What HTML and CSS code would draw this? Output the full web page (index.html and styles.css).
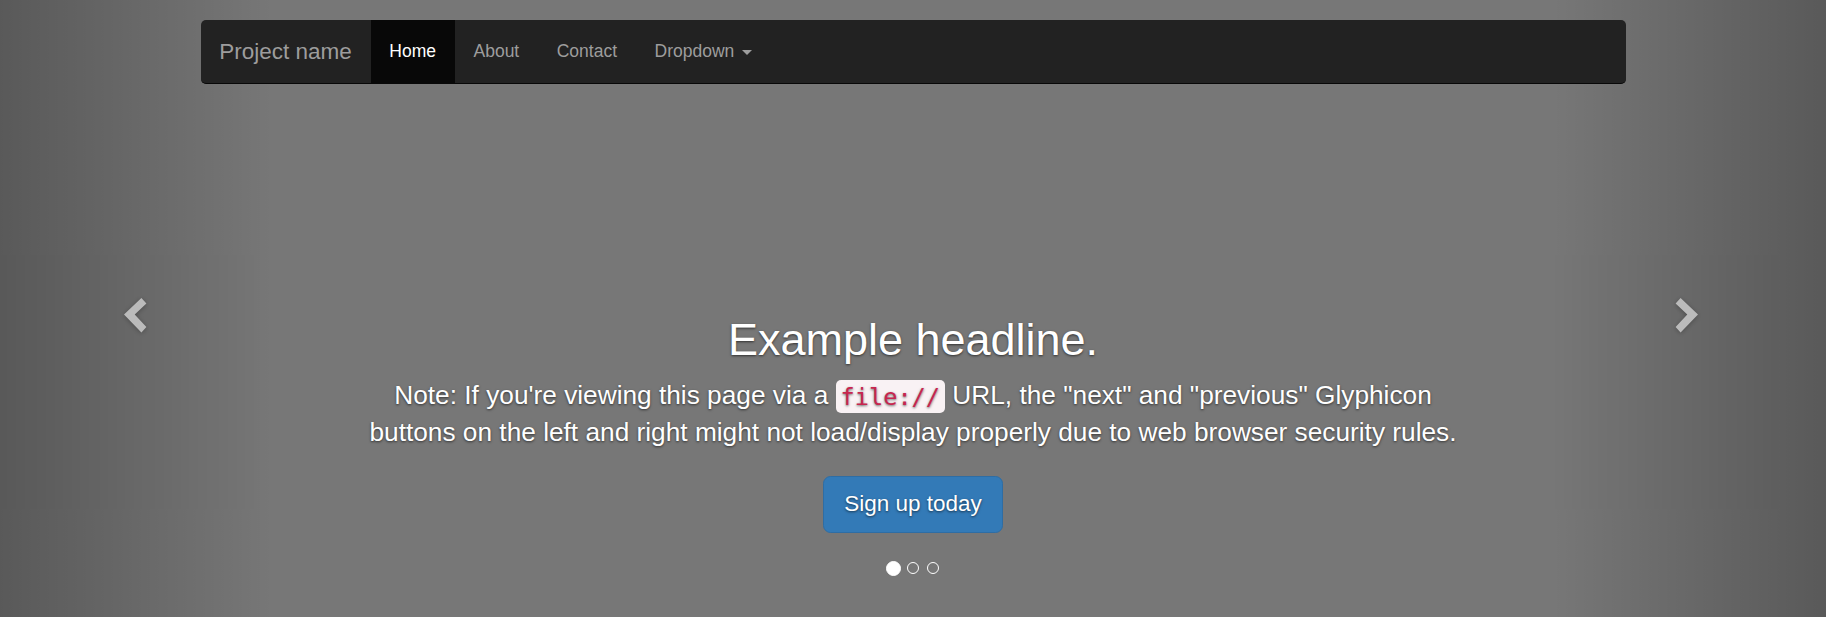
FILE: index.html
```html
<!DOCTYPE html>
<html lang="en">
<head>
<meta charset="utf-8">
<title>Carousel Template</title>
<link rel="stylesheet" href="styles.css">
</head>
<body>
<div class="carousel">
  <div class="item">
    <div class="caption">
      <h1 class="headline">Example headline.</h1>
      <p class="lead-text">Note: If you're viewing this page via a <code class="code">file://</code> URL, the "next" and "previous" Glyphicon buttons on the left and right might not load/display properly due to web browser security rules.</p>
      <p class="cta"><a class="btn-primary" href="#">Sign up today</a></p>
    </div>
  </div>
  <a class="control control-left" href="#">
    <svg class="chevron chevron-left" width="23" height="35" viewBox="0 0 23 35"><polygon points="0,16.6 17.4,0 22.4,5.6 10.7,16.6 22.4,29 17.4,34.6"/></svg>
  </a>
  <a class="control control-right" href="#">
    <svg class="chevron chevron-right" width="23" height="35" viewBox="0 0 23 35"><polygon points="23,16.6 5.6,0 0.6,5.6 12.3,16.6 0.6,29 5.6,34.6"/></svg>
  </a>
  <ol class="indicators">
    <li class="dot active"></li>
    <li class="dot"></li>
    <li class="dot"></li>
  </ol>
</div>
<div class="navbar-wrapper">
  <div class="container">
    <nav class="navbar">
      <a class="brand" href="#">Project name</a>
      <ul class="nav">
        <li class="nav-item"><a class="nav-link active" href="#">Home</a></li>
        <li class="nav-item"><a class="nav-link" href="#">About</a></li>
        <li class="nav-item"><a class="nav-link" href="#">Contact</a></li>
        <li class="nav-item"><a class="nav-link" href="#">Dropdown <span class="caret"></span></a></li>
      </ul>
    </nav>
  </div>
</div>
</body>
</html>
```

FILE: styles.css
```css
* {
  box-sizing: border-box;
}

html, body {
  margin: 0;
  padding: 0;
  overflow: hidden;
  background: #777;
}

body {
  font-family: "Liberation Sans", Arial, sans-serif;
  font-size: 17.5px;
  line-height: 1.42857;
  color: #333;
}

.carousel {
  position: relative;
  height: 620px;
  background-color: #777;
  overflow: hidden;
}

.item {
  position: relative;
  height: 100%;
}

.caption {
  position: absolute;
  left: 20%;
  right: 20%;
  bottom: 25px;
  z-index: 10;
  padding-top: 25px;
  padding-bottom: 37.5px;
  color: #fff;
  text-align: center;
  text-shadow: 0 1.25px 2.5px rgba(0, 0, 0, 0.6);
}

.headline {
  margin: 25px 0 12.5px;
  font-size: 45px;
  font-weight: 500;
  line-height: 1.1;
}

.lead-text {
  margin: 0 0 25px;
  font-size: 26.25px;
  line-height: 1.4;
}

.cta {
  margin: 0 0 25px;
  font-size: 26.25px;
  line-height: 1.4;
}

.code {
  padding: 2.5px 5px;
  font-family: "DejaVu Sans Mono", "Liberation Mono", monospace;
  font-size: 90%;
  color: #c7254e;
  background-color: #f9f2f4;
  border-radius: 5px;
}

.btn-primary {
  display: inline-block;
  padding: 12.5px 20px;
  font-size: 22.5px;
  line-height: 1.3333333;
  color: #fff;
  text-decoration: none;
  vertical-align: middle;
  background-color: #337ab7;
  border: 1.25px solid #2e6da4;
  border-radius: 7.5px;
}

.control {
  position: absolute;
  top: 0;
  bottom: 0;
  width: 15%;
  opacity: 0.5;
  color: #fff;
  text-decoration: none;
}

.control-left {
  left: 0;
  background-image: linear-gradient(to right, rgba(0, 0, 0, 0.5) 0, rgba(0, 0, 0, 0.0001) 100%);
}

.control-right {
  right: 0;
  background-image: linear-gradient(to right, rgba(0, 0, 0, 0.0001) 0, rgba(0, 0, 0, 0.5) 100%);
}

.chevron {
  position: absolute;
  top: 50%;
  left: 50%;
  margin-top: -12.3px;
  fill: #fff;
  filter: drop-shadow(0 1.25px 2.5px rgba(0, 0, 0, 0.6));
}

.chevron-left {
  margin-left: -12.65px;
}

.chevron-right {
  margin-left: -13.65px;
}

.indicators {
  position: absolute;
  bottom: 25px;
  left: 50%;
  z-index: 15;
  width: 60%;
  margin: 0 0 12.5px -30%;
  padding-left: 0;
  list-style: none;
  text-align: center;
  font-size: 17.5px;
  line-height: 25px;
}

.dot {
  display: inline-block;
  width: 12.5px;
  height: 12.5px;
  margin: 1.25px;
  border: 1.25px solid #fff;
  border-radius: 12.5px;
}

.dot.active {
  width: 15px;
  height: 15px;
  margin: 0;
  background-color: #fff;
}

.navbar-wrapper {
  position: absolute;
  top: 0;
  left: 0;
  right: 0;
  z-index: 20;
  margin-top: 20px;
}

.container {
  width: 1462.5px;
  margin: 0 auto;
  padding: 0 18.75px;
}

.navbar {
  display: flex;
  min-height: 62.5px;
  background-color: #222;
  border-bottom: 1.25px solid #080808;
  border-radius: 5px;
}

.brand {
  display: block;
  height: 62.5px;
  padding: 18.75px;
  font-size: 22.5px;
  line-height: 25px;
  color: #9d9d9d;
  text-decoration: none;
}

.nav {
  display: flex;
  margin: 0;
  padding: 0;
  list-style: none;
}

.nav-link {
  display: block;
  padding: 18.75px;
  font-size: 17.5px;
  line-height: 25px;
  color: #9d9d9d;
  text-decoration: none;
}

.nav-link.active {
  color: #fff;
  background-color: #080808;
}

.caret {
  display: inline-block;
  width: 0;
  height: 0;
  margin-left: 2.5px;
  vertical-align: middle;
  border-top: 5px solid;
  border-right: 5px solid transparent;
  border-left: 5px solid transparent;
}
```
